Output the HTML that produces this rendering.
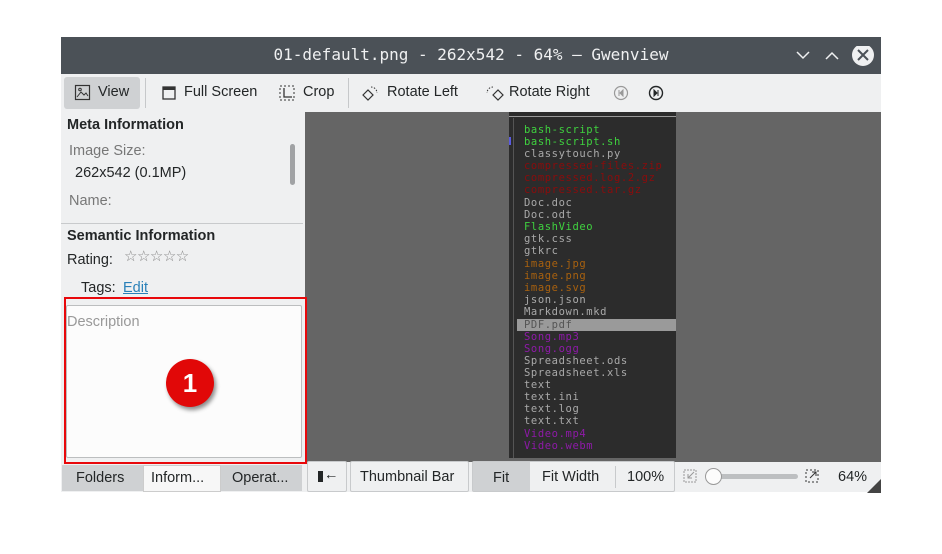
<!DOCTYPE html>
<html><head><meta charset="utf-8"><style>
*{margin:0;padding:0;box-sizing:border-box}
body{width:942px;height:554px;background:#fff;position:relative;overflow:hidden;font-family:"Liberation Sans",sans-serif;color:#232627}
.a{position:absolute}
.t{font-size:14.5px;white-space:nowrap}
.mono{font-family:"DejaVu Sans Mono","Liberation Mono",monospace}
.ln{position:absolute;left:524px;font-size:10.5px;letter-spacing:0.6px;font-family:"DejaVu Sans Mono",monospace;white-space:nowrap}
.g{color:#3fd13f}.w{color:#a9a9a9}.r{color:#8b0c0c}.o{color:#a8610f}.p{color:#8e1aa8}
</style></head><body>
<!-- title bar -->
<div class="a" style="left:61px;top:37px;width:820px;height:37px;background:#4b5157"></div>
<div class="a mono" style="left:61px;top:45px;width:820px;text-align:center;color:#eff0f1;font-size:16px">01-default.png - 262x542 - 64% — Gwenview</div>
<svg class="a" style="left:792px;top:46px" width="90" height="20"><path d="M5 6l6 6 6-6" stroke="#eff0f1" stroke-width="1.5" fill="none"/><path d="M34 13l6-6 6 6" stroke="#eff0f1" stroke-width="1.5" fill="none"/><circle cx="71" cy="9" r="11" fill="#eff0f1"/><path d="M66 4l10 10M76 4l-10 10" stroke="#4b5157" stroke-width="2"/></svg>
<!-- toolbar -->
<div class="a" style="left:61px;top:74px;width:820px;height:38px;background:#eff0f1"></div>
<div class="a" style="left:64px;top:77px;width:76px;height:32px;background:#cfd1d3;border-radius:3px"></div>
<div class="a" style="left:145px;top:78px;width:1px;height:30px;background:#c6c8ca"></div>
<div class="a" style="left:348px;top:78px;width:1px;height:30px;background:#c6c8ca"></div>
<svg class="a" style="left:74px;top:84px" width="18" height="18"><rect x="1.5" y="1.5" width="14" height="14" fill="none" stroke="#333" stroke-width="1.2"/><path d="M3 13l4-5 3 3 2-2 2 3" fill="none" stroke="#333"/><circle cx="6" cy="5.5" r="1.3" fill="none" stroke="#333"/></svg>
<div class="a t" style="left:98px;top:84px">View</div>
<svg class="a" style="left:160px;top:84px" width="18" height="18"><rect x="3" y="3" width="12" height="12" fill="none" stroke="#333" stroke-width="1.3"/><rect x="3" y="3" width="12" height="3" fill="#333"/></svg>
<div class="a t" style="left:184px;top:84px">Full Screen</div>
<svg class="a" style="left:278px;top:84px" width="18" height="18"><rect x="2" y="2" width="14" height="14" fill="none" stroke="#333" stroke-dasharray="2 2"/><path d="M6 4v9h8" fill="none" stroke="#333" stroke-width="1.3"/></svg>
<div class="a t" style="left:303px;top:84px">Crop</div>
<svg class="a" style="left:361px;top:84px" width="20" height="18"><path d="M2 11l5-5 5 5-5 5z" fill="none" stroke="#333" stroke-width="1.2"/><path d="M10 3a6 6 0 0 1 6 6" fill="none" stroke="#333" stroke-dasharray="1.5 1.5"/></svg>
<div class="a t" style="left:387px;top:84px">Rotate Left</div>
<svg class="a" style="left:484px;top:84px" width="20" height="18"><path d="M9 11l5-5 5 5-5 5z" fill="none" stroke="#333" stroke-width="1.2"/><path d="M9 3a6 6 0 0 0-6 6" fill="none" stroke="#333" stroke-dasharray="1.5 1.5"/></svg>
<div class="a t" style="left:509px;top:84px">Rotate Right</div>
<svg class="a" style="left:612px;top:84px" width="60" height="18"><circle cx="9" cy="9" r="6.5" fill="none" stroke="#999" stroke-width="1.2"/><path d="M7 6v6M11 6l-3 3 3 3z" stroke="#999" fill="#999"/><circle cx="44" cy="9" r="6.5" fill="none" stroke="#232627" stroke-width="1.4"/><path d="M46 6v6M42 6l3 3-3 3z" stroke="#232627" fill="#232627"/></svg>
<!-- left panel -->
<div class="a" style="left:61px;top:112px;width:244px;height:350px;background:#eff0f1"></div>
<div class="a t" style="left:67px;top:117px;font-weight:bold;font-size:14.5px">Meta Information</div>
<div class="a t" style="left:69px;top:143px;color:#777">Image Size:</div>
<div class="a t" style="left:75px;top:165px">262x542 (0.1MP)</div>
<div class="a t" style="left:69px;top:193px;color:#777">Name:</div>
<div class="a" style="left:290px;top:144px;width:5px;height:41px;background:#a0a2a4;border-radius:3px"></div>
<div class="a" style="left:61px;top:223px;width:242px;height:1px;background:#c8cacc"></div>
<div class="a t" style="left:67px;top:228px;font-weight:bold;font-size:14.5px">Semantic Information</div>
<div class="a t" style="left:67px;top:252px">Rating:</div>
<div class="a" style="left:124px;top:247px;font-size:15px;color:#888;letter-spacing:-0.5px;font-family:'DejaVu Sans',sans-serif">☆☆☆☆☆</div>
<div class="a t" style="left:81px;top:280px">Tags:</div>
<div class="a t" style="left:123px;top:280px;color:#2980b9;text-decoration:underline">Edit</div>
<div class="a" style="left:66px;top:305px;width:236px;height:153px;background:#fcfcfc;border:1px solid #bcbebf;border-radius:2px"></div>
<div class="a t" style="left:67px;top:314px;color:#999">Description</div>
<!-- bottom tabs -->
<div class="a" style="left:61px;top:462px;width:820px;height:30px;background:#eff0f1"></div>
<div class="a" style="left:62px;top:465px;width:81px;height:26px;background:#cfd1d3"></div>
<div class="a" style="left:143px;top:465px;width:78px;height:27px;background:#f7f7f7;border:1px solid #ccc"></div>
<div class="a" style="left:221px;top:465px;width:81px;height:26px;background:#cfd1d3"></div>
<div class="a t" style="left:76px;top:470px">Folders</div>
<div class="a t" style="left:151px;top:470px">Inform...</div>
<div class="a t" style="left:232px;top:470px">Operat...</div>
<!-- image area -->
<div class="a" style="left:305px;top:112px;width:576px;height:350px;background:#656565"></div>
<div class="a" style="left:509px;top:112px;width:167px;height:346px;background:#2c2c2c"></div>
<div class="a" style="left:509px;top:116px;width:167px;height:1px;background:#999"></div>
<div class="a" style="left:513px;top:118px;width:1px;height:340px;background:#555"></div>
<div class="a" style="left:509px;top:137px;width:2px;height:8px;background:#5a5ae0"></div>
<div class="a" style="left:517px;top:319px;width:159px;height:12px;background:#9a9a9a"></div>
<div class="ln g" style="top:124px">bash-script</div>
<div class="ln g" style="top:136px">bash-script.sh</div>
<div class="ln w" style="top:148px">classytouch.py</div>
<div class="ln r" style="top:160px">compressed-files.zip</div>
<div class="ln r" style="top:172px">compressed.log.2.gz</div>
<div class="ln r" style="top:184px">compressed.tar.gz</div>
<div class="ln w" style="top:197px">Doc.doc</div>
<div class="ln w" style="top:209px">Doc.odt</div>
<div class="ln g" style="top:221px">FlashVideo</div>
<div class="ln w" style="top:233px">gtk.css</div>
<div class="ln w" style="top:245px">gtkrc</div>
<div class="ln o" style="top:258px">image.jpg</div>
<div class="ln o" style="top:270px">image.png</div>
<div class="ln o" style="top:282px">image.svg</div>
<div class="ln w" style="top:294px">json.json</div>
<div class="ln w" style="top:306px">Markdown.mkd</div>
<div class="ln" style="top:319px;color:#555">PDF.pdf</div>
<div class="ln p" style="top:331px">Song.mp3</div>
<div class="ln p" style="top:343px">Song.ogg</div>
<div class="ln w" style="top:355px">Spreadsheet.ods</div>
<div class="ln w" style="top:367px">Spreadsheet.xls</div>
<div class="ln w" style="top:379px">text</div>
<div class="ln w" style="top:391px">text.ini</div>
<div class="ln w" style="top:403px">text.log</div>
<div class="ln w" style="top:415px">text.txt</div>
<div class="ln p" style="top:428px">Video.mp4</div>
<div class="ln p" style="top:440px">Video.webm</div>
<!-- red annotation -->
<div class="a" style="left:64px;top:297px;width:243px;height:167px;border:2px solid #e8080b;z-index:5"></div>
<div class="a" style="left:166px;top:359px;width:48px;height:48px;border-radius:50%;background:#e10808;box-shadow:2px 3px 4px rgba(0,0,0,.45);color:#fff;font-weight:bold;font-size:26px;text-align:center;line-height:48px;z-index:5">1</div>
<!-- bottom bar buttons -->
<div class="a" style="left:307px;top:461px;width:40px;height:31px;background:#eff0f1;border:1px solid #c8cacc;border-radius:2px"></div>
<div class="a" style="left:318px;top:471px;width:5px;height:11px;background:#232627"></div>
<div class="a t" style="left:324px;top:467px">←</div>
<div class="a" style="left:350px;top:461px;width:119px;height:31px;background:#eff0f1;border:1px solid #c8cacc;border-radius:2px"></div>
<div class="a t" style="left:360px;top:469px">Thumbnail Bar</div>
<div class="a" style="left:472px;top:461px;width:203px;height:31px;background:#eff0f1;border:1px solid #c8cacc;border-radius:2px"></div>
<div class="a" style="left:473px;top:462px;width:57px;height:29px;background:#cfd1d3"></div>
<div class="a" style="left:615px;top:466px;width:1px;height:22px;background:#c8cacc"></div>
<div class="a t" style="left:493px;top:470px">Fit</div>
<div class="a t" style="left:542px;top:469px">Fit Width</div>
<div class="a t" style="left:627px;top:469px">100%</div>
<svg class="a" style="left:683px;top:469px" width="14" height="14"><rect x="1" y="1" width="12" height="12" fill="none" stroke="#999" stroke-dasharray="2 1"/><path d="M11 3l-6 6M5 5v4h4" fill="none" stroke="#999"/></svg>
<div class="a" style="left:708px;top:474px;width:90px;height:5px;background:#bdbfc1;border-radius:3px"></div>
<div class="a" style="left:705px;top:468px;width:17px;height:17px;border-radius:50%;background:#fcfcfc;border:1px solid #999"></div>
<svg class="a" style="left:805px;top:469px" width="14" height="14"><rect x="1" y="1" width="12" height="12" fill="none" stroke="#333" stroke-dasharray="2 2"/><path d="M5 9l6-6M7 3h4v4" fill="none" stroke="#333"/></svg>
<div class="a t" style="left:838px;top:469px">64%</div>
<svg class="a" style="left:867px;top:479px" width="14" height="14"><path d="M14 0v14H0z" fill="#444"/></svg>
</body></html>
